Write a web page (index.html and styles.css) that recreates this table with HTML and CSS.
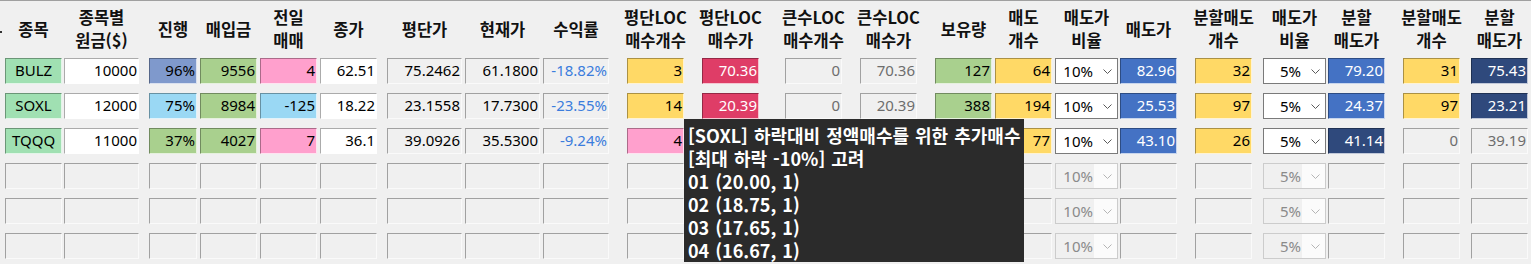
FILE: index.html
```html
<!DOCTYPE html>
<html lang="ko">
<head>
<meta charset="utf-8">
<title>LOC</title>
<link rel="stylesheet" href="styles.css">
</head>
<body>
<div class="app">
  <div class="hdr">
    <span class="dot"></span>
    <div class="h c-name"><span>종목</span></div>
    <div class="h c-prin"><span>종목별<br>원금($)</span></div>
    <div class="h c-prog"><span>진행</span></div>
    <div class="h c-buy"><span>매입금</span></div>
    <div class="h c-prev"><span>전일<br>매매</span></div>
    <div class="h c-close"><span>종가</span></div>
    <div class="h c-avg"><span>평단가</span></div>
    <div class="h c-cur"><span>현재가</span></div>
    <div class="h c-ret"><span>수익률</span></div>
    <div class="h c-alq"><span>평단LOC<br>매수개수</span></div>
    <div class="h c-alp"><span>평단LOC<br>매수가</span></div>
    <div class="h c-blq"><span>큰수LOC<br>매수개수</span></div>
    <div class="h c-blp"><span>큰수LOC<br>매수가</span></div>
    <div class="h c-hold"><span>보유량</span></div>
    <div class="h c-sq"><span>매도<br>개수</span></div>
    <div class="h c-sr"><span>매도가<br>비율</span></div>
    <div class="h c-sp"><span>매도가</span></div>
    <div class="h c-pq"><span>분할매도<br>개수</span></div>
    <div class="h c-pr"><span>매도가<br>비율</span></div>
    <div class="h c-pp"><span>분할<br>매도가</span></div>
    <div class="h c-pq2"><span>분할매도<br>개수</span></div>
    <div class="h c-pp2"><span>분할<br>매도가</span></div>
  </div>

  <div class="row">
    <div class="cell c-name mint center">BULZ</div>
    <div class="cell c-prin white">10000</div>
    <div class="cell c-prog steel">96%</div>
    <div class="cell c-buy green">9556</div>
    <div class="cell c-prev pink">4</div>
    <div class="cell c-close white">62.51</div>
    <div class="cell c-avg">75.2462</div>
    <div class="cell c-cur">61.1800</div>
    <div class="cell c-ret blue-text">-18.82%</div>
    <div class="cell c-alq yellow">3</div>
    <div class="cell c-alp crimson">70.36</div>
    <div class="cell c-blq dis">0</div>
    <div class="cell c-blp dis">70.36</div>
    <div class="cell c-hold green">127</div>
    <div class="cell c-sq yellow">64</div>
    <div class="combo c-sr"><span class="ctext">10%</span><span class="carrow"><svg width="9" height="5" viewBox="0 0 9 5"><polyline points="0.5,0.5 4.5,4.5 8.5,0.5" fill="none" stroke="#5a5a5a" stroke-width="1"/></svg></span></div>
    <div class="cell c-sp blue">82.96</div>
    <div class="cell c-pq yellow">32</div>
    <div class="combo c-pr"><span class="ctext">5%</span><span class="carrow"><svg width="9" height="5" viewBox="0 0 9 5"><polyline points="0.5,0.5 4.5,4.5 8.5,0.5" fill="none" stroke="#5a5a5a" stroke-width="1"/></svg></span></div>
    <div class="cell c-pp blue">79.20</div>
    <div class="cell c-pq2 yellow">31</div>
    <div class="cell c-pp2 navy">75.43</div>
  </div>

  <div class="row">
    <div class="cell c-name mint center">SOXL</div>
    <div class="cell c-prin white">12000</div>
    <div class="cell c-prog sky">75%</div>
    <div class="cell c-buy green">8984</div>
    <div class="cell c-prev sky">-125</div>
    <div class="cell c-close white">18.22</div>
    <div class="cell c-avg">23.1558</div>
    <div class="cell c-cur">17.7300</div>
    <div class="cell c-ret blue-text">-23.55%</div>
    <div class="cell c-alq yellow">14</div>
    <div class="cell c-alp crimson">20.39</div>
    <div class="cell c-blq dis">0</div>
    <div class="cell c-blp dis">20.39</div>
    <div class="cell c-hold green">388</div>
    <div class="cell c-sq yellow">194</div>
    <div class="combo c-sr"><span class="ctext">10%</span><span class="carrow"><svg width="9" height="5" viewBox="0 0 9 5"><polyline points="0.5,0.5 4.5,4.5 8.5,0.5" fill="none" stroke="#5a5a5a" stroke-width="1"/></svg></span></div>
    <div class="cell c-sp blue">25.53</div>
    <div class="cell c-pq yellow">97</div>
    <div class="combo c-pr"><span class="ctext">5%</span><span class="carrow"><svg width="9" height="5" viewBox="0 0 9 5"><polyline points="0.5,0.5 4.5,4.5 8.5,0.5" fill="none" stroke="#5a5a5a" stroke-width="1"/></svg></span></div>
    <div class="cell c-pp blue">24.37</div>
    <div class="cell c-pq2 yellow">97</div>
    <div class="cell c-pp2 navy">23.21</div>
  </div>

  <div class="row">
    <div class="cell c-name mint center">TQQQ</div>
    <div class="cell c-prin white">11000</div>
    <div class="cell c-prog green">37%</div>
    <div class="cell c-buy green">4027</div>
    <div class="cell c-prev pink">7</div>
    <div class="cell c-close white">36.1</div>
    <div class="cell c-avg">39.0926</div>
    <div class="cell c-cur">35.5300</div>
    <div class="cell c-ret blue-text">-9.24%</div>
    <div class="cell c-alq pink">4</div>
    <div class="cell c-alp crimson"></div>
    <div class="cell c-blq dis"></div>
    <div class="cell c-blp dis"></div>
    <div class="cell c-hold green"></div>
    <div class="cell c-sq yellow">77</div>
    <div class="combo c-sr"><span class="ctext">10%</span><span class="carrow"><svg width="9" height="5" viewBox="0 0 9 5"><polyline points="0.5,0.5 4.5,4.5 8.5,0.5" fill="none" stroke="#5a5a5a" stroke-width="1"/></svg></span></div>
    <div class="cell c-sp blue">43.10</div>
    <div class="cell c-pq yellow">26</div>
    <div class="combo c-pr"><span class="ctext">5%</span><span class="carrow"><svg width="9" height="5" viewBox="0 0 9 5"><polyline points="0.5,0.5 4.5,4.5 8.5,0.5" fill="none" stroke="#5a5a5a" stroke-width="1"/></svg></span></div>
    <div class="cell c-pp navy">41.14</div>
    <div class="cell c-pq2 dis">0</div>
    <div class="cell c-pp2 dis">39.19</div>
  </div>

  <div class="row">
    <div class="cell c-name"></div><div class="cell c-prin"></div><div class="cell c-prog"></div><div class="cell c-buy"></div><div class="cell c-prev"></div><div class="cell c-close"></div><div class="cell c-avg"></div><div class="cell c-cur"></div><div class="cell c-ret"></div><div class="cell c-alq"></div><div class="cell c-alp"></div><div class="cell c-blq"></div><div class="cell c-blp"></div><div class="cell c-hold"></div><div class="cell c-sq"></div>
    <div class="combo off c-sr"><span class="ctext">10%</span><span class="carrow"><svg width="9" height="5" viewBox="0 0 9 5"><polyline points="0.5,0.5 4.5,4.5 8.5,0.5" fill="none" stroke="#b4b4b4" stroke-width="1"/></svg></span></div>
    <div class="cell c-sp"></div><div class="cell c-pq"></div>
    <div class="combo off c-pr"><span class="ctext">5%</span><span class="carrow"><svg width="9" height="5" viewBox="0 0 9 5"><polyline points="0.5,0.5 4.5,4.5 8.5,0.5" fill="none" stroke="#b4b4b4" stroke-width="1"/></svg></span></div>
    <div class="cell c-pp"></div><div class="cell c-pq2"></div><div class="cell c-pp2"></div>
  </div>

  <div class="row">
    <div class="cell c-name"></div><div class="cell c-prin"></div><div class="cell c-prog"></div><div class="cell c-buy"></div><div class="cell c-prev"></div><div class="cell c-close"></div><div class="cell c-avg"></div><div class="cell c-cur"></div><div class="cell c-ret"></div><div class="cell c-alq"></div><div class="cell c-alp"></div><div class="cell c-blq"></div><div class="cell c-blp"></div><div class="cell c-hold"></div><div class="cell c-sq"></div>
    <div class="combo off c-sr"><span class="ctext">10%</span><span class="carrow"><svg width="9" height="5" viewBox="0 0 9 5"><polyline points="0.5,0.5 4.5,4.5 8.5,0.5" fill="none" stroke="#b4b4b4" stroke-width="1"/></svg></span></div>
    <div class="cell c-sp"></div><div class="cell c-pq"></div>
    <div class="combo off c-pr"><span class="ctext">5%</span><span class="carrow"><svg width="9" height="5" viewBox="0 0 9 5"><polyline points="0.5,0.5 4.5,4.5 8.5,0.5" fill="none" stroke="#b4b4b4" stroke-width="1"/></svg></span></div>
    <div class="cell c-pp"></div><div class="cell c-pq2"></div><div class="cell c-pp2"></div>
  </div>

  <div class="row">
    <div class="cell c-name"></div><div class="cell c-prin"></div><div class="cell c-prog"></div><div class="cell c-buy"></div><div class="cell c-prev"></div><div class="cell c-close"></div><div class="cell c-avg"></div><div class="cell c-cur"></div><div class="cell c-ret"></div><div class="cell c-alq"></div><div class="cell c-alp"></div><div class="cell c-blq"></div><div class="cell c-blp"></div><div class="cell c-hold"></div><div class="cell c-sq"></div>
    <div class="combo off c-sr"><span class="ctext">10%</span><span class="carrow"><svg width="9" height="5" viewBox="0 0 9 5"><polyline points="0.5,0.5 4.5,4.5 8.5,0.5" fill="none" stroke="#b4b4b4" stroke-width="1"/></svg></span></div>
    <div class="cell c-sp"></div><div class="cell c-pq"></div>
    <div class="combo off c-pr"><span class="ctext">5%</span><span class="carrow"><svg width="9" height="5" viewBox="0 0 9 5"><polyline points="0.5,0.5 4.5,4.5 8.5,0.5" fill="none" stroke="#b4b4b4" stroke-width="1"/></svg></span></div>
    <div class="cell c-pp"></div><div class="cell c-pq2"></div><div class="cell c-pp2"></div>
  </div>

  <div class="tip">
    <div>[SOXL] 하락대비 정액매수를 위한 추가매수</div>
    <div>[최대 하락 -10%] 고려</div>
    <div>01 (20.00, 1)</div>
    <div>02 (18.75, 1)</div>
    <div>03 (17.65, 1)</div>
    <div>04 (16.67, 1)</div>
  </div>
</div>
</body>
</html>
```

FILE: styles.css
```css
html, body {
  margin: 0;
  padding: 0;
  background: #f0f0f0;
}
body {
  font-family: "Noto Sans", "Noto Sans CJK KR", sans-serif;
  color: #000;
  overflow: hidden;
}
.app {
  position: relative;
  height: 263px;
  border-top: 1px solid #a0a0a0;
}
.hdr {
  display: flex;
  height: 46px;
  margin-top: 5px;
  align-items: center;
}
.dot {
  width: 2px;
  height: 2px;
  background: #333;
  margin-top: 6px;
  flex: none;
}
.h {
  display: flex;
  justify-content: center;
  align-items: center;
  height: 46px;
  font-family: "Noto Sans CJK KR", sans-serif;
  font-weight: 700;
  font-size: 16.5px;
  line-height: 23px;
  color: #111;
  white-space: nowrap;
  flex: none;
}
.h span {
  text-align: center;
}
.row {
  display: flex;
  margin-top: 9px;
}
.hdr + .row {
  margin-top: 6px;
}
.cell {
  box-sizing: border-box;
  flex: none;
  height: 26px;
  border-style: solid;
  border-width: 1px;
  border-color: rgba(0,0,0,0.33) rgba(255,255,255,0.7) rgba(255,255,255,0.7) rgba(0,0,0,0.33);
  background: #f0f0f0;
  font-size: 15px;
  line-height: 23px;
  text-align: right;
  padding-right: 1px;
  white-space: nowrap;
  overflow: hidden;
}
.center { text-align: center; padding-right: 0; }

/* column geometry */
.c-name  { width: 57px; margin-left: 5px; }
.hdr .c-name { margin-left: 3px; }
.c-prin  { width: 75px; margin-left: 2px; }
.c-prog  { width: 48px; margin-left: 10px; }
.c-buy   { width: 57px; margin-left: 3px; }
.c-prev  { width: 57px; margin-left: 3px; }
.c-close { width: 57px; margin-left: 3px; }
.c-avg   { width: 75px; margin-left: 10px; }
.c-cur   { width: 75px; margin-left: 3px; }
.c-ret   { width: 66px; margin-left: 3px; }
.c-alq   { width: 57px; margin-left: 18px; }
.c-alp   { width: 57px; margin-left: 18px; }
.c-blq   { width: 57px; margin-left: 26px; }
.c-blp   { width: 57px; margin-left: 18px; }
.c-hold  { width: 57px; margin-left: 18px; }
.c-sq    { width: 57px; margin-left: 3px; }
.c-sr    { width: 63px; margin-left: 3px; }
.c-sp    { width: 57px; margin-left: 2px; }
.c-pq    { width: 57px; margin-left: 18px; }
.c-pr    { width: 63px; margin-left: 11px; }
.c-pp    { width: 57px; margin-left: 2px; }
.c-pq2   { width: 57px; margin-left: 18px; }
.c-pp2   { width: 57px; margin-left: 11px; }

/* fills */
.white   { background: #ffffff; }
.mint    { background: #a0e0b2; }
.steel   { background: #7f99cc; }
.sky     { background: #9ad8f4; }
.green   { background: #a9d08e; }
.pink    { background: #ffa0cd; }
.yellow  { background: #ffd966; }
.crimson { background: #df3d67; color: #fff; }
.blue    { background: #4472c4; color: #fff; }
.navy    { background: #2f497c; color: #fff; }
.dis     { color: #6d6d6d; }
.blue-text { color: #3b7ddd; }

/* combo boxes */
.combo {
  box-sizing: border-box;
  flex: none;
  display: flex;
  height: 26px;
  border: 1px solid #7a7a7a;
  background: #fff;
  font-size: 15px;
  line-height: 24px;
}
.ctext {
  flex: 1;
  text-align: right;
  padding-right: 1px;
}
.carrow {
  flex: none;
  width: 23px;
  box-sizing: border-box;
  padding-left: 9px;
  display: flex;
  align-items: center;
}
.carrow svg { display: block; }
.combo.off {
  border-color: #cccccc;
  background: #fbfbfb;
  color: #8a8a8a;
}
.combo.off .ctext {
  background: #f0f0f0;
}

/* tooltip */
.tip {
  position: absolute;
  left: 684px;
  top: 118px;
  width: 340px;
  height: 143px;
  box-sizing: border-box;
  padding: 5px 4px;
  background: #2b2b2b;
  color: #ffffff;
  font-family: "Noto Sans CJK KR", sans-serif;
  font-weight: 700;
  font-size: 18px;
  line-height: 23px;
  word-spacing: 1px;
  white-space: nowrap;
  overflow: hidden;
}
```
